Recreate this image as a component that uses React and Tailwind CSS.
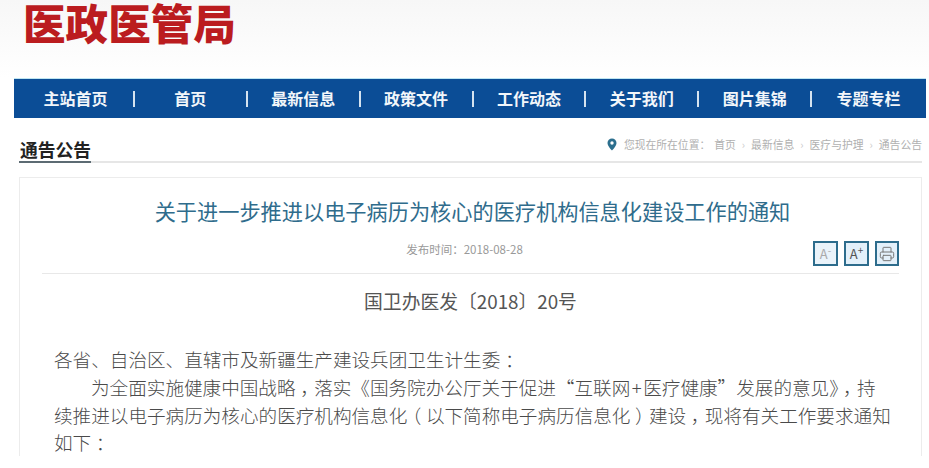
import { Printer } from "lucide-react";

const navItems = ["主站首页", "首页", "最新信息", "政策文件", "工作动态", "关于我们", "图片集锦", "专题专栏"];
const crumbs = ["首页", "最新信息", "医疗与护理", "通告公告"];

// 原图标点在字格中间：halt 压成半宽，再用 padding 补回一个字宽
function Mark({ children }) {
    return <span className="px-[0.25em] [font-feature-settings:'halt']">{children}</span>;
}
function Quote({ children, right }) {
    return <span className={`inline-block w-[1em] indent-0 ${right ? "text-left" : "text-right"}`}>{children}</span>;
}

export default function App() {
    return (
        <div className="h-[468px] w-[929px] overflow-hidden bg-white font-['Noto_Sans_CJK_SC',sans-serif]">
            <header className="h-[78px] bg-gradient-to-b from-[#f7f7f7] to-white pl-[23px]">
                <h1 className="text-[42.6px] leading-[44px] font-black text-[#bb1c1f]">医政医管局</h1>
            </header>

            <nav className="ml-[14px] flex h-[40px] w-[912px] items-center border-t border-[#bfe6f2] bg-[#0b4d96] pl-[8px] pr-[1px]">
                {navItems.map((item, i) => (
                    <div key={item} className="flex flex-1 items-center">
                        <span className={`flex-1 pb-[1px] text-center text-[16px] font-bold text-[#f2f6fa] ${i === 0 ? "pr-1" : ""}`}>{item}</span>
                        {i < navItems.length - 1 && <span className="h-[16px] w-[2px] bg-[#d5e3f0]"></span>}
                    </div>
                ))}
            </nav>

            <div className="ml-[19px] mt-[20px] flex h-[25px] w-[903px] items-start justify-between border-b-2 border-[#e6e6e6]">
                <h2 className="h-[25px] border-b-2 border-[#5c6b73] pl-[1px] text-[17.8px] leading-[22px] font-bold text-[#222]">通告公告</h2>
                <div className="-mt-[1px] flex items-center text-[10.8px] leading-[14px] text-[#b0b0b0]">
                    <svg width="10" height="13" viewBox="0 0 10 13" className="mr-[7px]">
                        <path d="M5 0.5a4.5 4.5 0 0 0-4.5 4.5c0 3 4.5 7.5 4.5 7.5s4.5-4.5 4.5-7.5A4.5 4.5 0 0 0 5 0.5zm0 6.2a1.7 1.7 0 1 1 0-3.4 1.7 1.7 0 0 1 0 3.4z" fill="#2c6f8e" />
                    </svg>
                    <span className="mr-[4px] whitespace-nowrap">您现在所在位置：</span>
                    {crumbs.map((c, i) => (
                        <span key={c} className="flex items-center">
                            {c}
                            {i < crumbs.length - 1 && <span className="mx-[6px] text-[#ccc]">›</span>}
                        </span>
                    ))}
                </div>
            </div>

            <main className="ml-[19px] mt-[14px] h-[279px] w-[903px] border-x border-t border-[#ececec] px-[22px]">
                <h3 className="pl-1 pt-[17px] text-center text-[21.2px] leading-[32px] font-normal text-[#2f6c8c]">关于进一步推进以电子病历为核心的医疗机构信息化建设工作的通知</h3>
                <div className="flex h-[47px] items-start border-b border-[#e8e8e8] pt-[5px]">
                    <p className="mr-[-74px] flex-1 pt-[9px] text-center text-[11.5px] leading-[16px] text-[#999]">发布时间：2018-08-28</p>
                    <div className="ml-auto mt-[9px] flex gap-[6px]">
                        <button className="flex h-[25px] w-[25px] items-start justify-center border-2 border-[#2d6c8c] bg-[#eaf3fa] text-[13px] leading-[21px] text-[#aaa]">A<sup className="top-[2px] text-[10px] leading-[10px]">-</sup></button>
                        <button className="flex h-[25px] w-[25px] items-start justify-center border-2 border-[#2d6c8c] bg-[#e3f0fa] text-[13px] leading-[21px] text-[#555]">A<sup className="top-[2px] text-[10px] leading-[10px]">+</sup></button>
                        <button className="flex h-[25px] w-[24px] items-center justify-center border-2 border-[#2d6c8c] bg-[#e3f0fa] text-[#777]"><Printer size={16} strokeWidth={1.5} /></button>
                    </div>
                </div>
                <p className="pt-[13px] text-center text-[18.8px] leading-[28px] text-[#555]">国卫办医发〔2018〕20号</p>
                <div className="mt-[30px] pl-[12px] pr-[6px] text-[18.6px] leading-[27.8px] font-light text-[#4a4a4a]">
                    <p>各省、自治区、直辖市及新疆生产建设兵团卫生计生委<Mark>：</Mark></p>
                    <p className="indent-[37px]">
                        为全面实施健康中国战略<Mark>，</Mark>落实《国务院办公厅关于促进<Quote>“</Quote>互联网<span className="mx-[1.5px]">+</span>医疗健康<Quote right>”</Quote>发展的意见》<Mark>，</Mark>持续推进以电子病历为核心的医疗机构信息化<Mark>（</Mark>以下简称电子病历信息化<Mark>）</Mark>建设<Mark>，</Mark>现将有关工作要求通知如下<Mark>：</Mark>
                    </p>
                </div>
            </main>
        </div>
    );
}
